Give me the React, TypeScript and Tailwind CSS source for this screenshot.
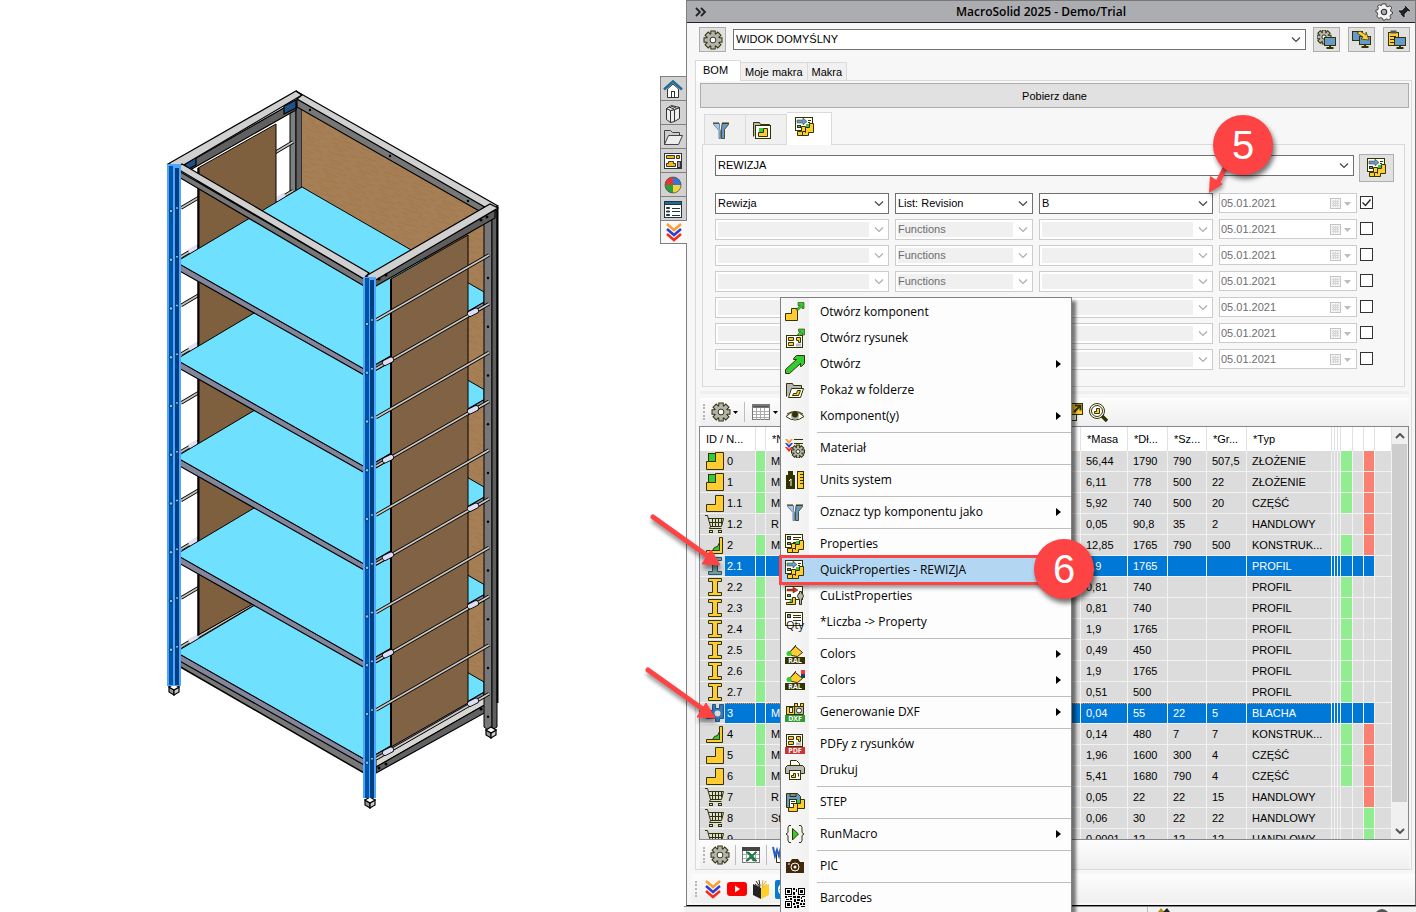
import { useState } from 'react'
import type { ReactNode } from 'react'

const INK = '#333300'
const YEL = '#ffcc33'
const GRN = '#33cc33'
const BLU = '#6699cc'

function Gear({ cx = 10, cy = 10, r = 6 }: { cx?: number; cy?: number; r?: number }) {
  const teeth = (stroke: string, grow: number) =>
    [0, 45, 90, 135].map((a) => (
      <rect
        key={a}
        x={cx - r / 4 - grow}
        y={cy - r - 1.5 - grow}
        width={r / 2 + grow * 2}
        height={r * 2 + 3 + grow * 2}
        fill={stroke}
        transform={`rotate(${a} ${cx} ${cy})`}
      />
    ))
  return (
    <g>
      {teeth(INK, 1)}
      <circle cx={cx} cy={cy} r={r} fill={INK} />
      {teeth('#b4b4b4', 0)}
      <circle cx={cx} cy={cy} r={r - 1} fill="#b4b4b4" />
      <circle cx={cx} cy={cy} r={r / 2.4} fill="#fff" stroke={INK} />
    </g>
  )
}

const doc = <rect x="0.5" y="0.5" width="17" height="13" fill="#fff" stroke={INK} />

const twoParts = (
  <g stroke={INK}>
    <path d="M2.5 18.5v-4h4v-5h4v9z" fill={YEL} />
    <path d="M10.5 15.5v-5h4v-4h4v9h-5v3h-6v-4h3z" fill={YEL} />
    <rect x="11" y="7" width="3" height="3" fill={GRN} stroke="none" />
  </g>
)

const cart = (
  <g fill="none" stroke={INK}>
    <path d="M0 1.5h2.5l3 11M3 4.5h15.500l-2 8H5M4 8.500h13.500M7.500 4.500v8M10.500 4.500v8M13.500 4.500v8M16.500 4.500v6M5.500 12.500l-1 2h12" />
    <rect x="4.500" y="16.500" width="3" height="2" />
    <rect x="13.500" y="16.500" width="3" height="2" />
  </g>
)

const chevrons = (
  <g fill="none" strokeWidth="2.500">
    <path d="M3 2l7 6 7-6" stroke="#ff9c2a" />
    <path d="M3 7l7 6 7-6" stroke="#2b3fd0" />
    <path d="M3 12l7 6 7-6" stroke="#f52a1a" />
  </g>
)

const plan = (y: number) => (
  <g stroke={INK}>
    <rect x="1.500" y={y} width="16" height="12" fill="#fff" />
    <path d={`M3.500 ${y + 2}h5v3h-5zM11.500 ${y + 2}h4v5h-2v-2h-2z`} fill={YEL} />
    <path d={`M3.500 ${y + 9}v-2h5v3h-5z`} fill={YEL} />
    <rect x="11" y={y + 8} width="5" height="3" fill="#bbb" stroke="none" />
  </g>
)

const monitor = (x: number, y: number) => (
  <g stroke={INK}>
    <path d={`M${x + 5.5} ${y + 8}v3M${x + 2} ${y + 10.5}h7`} strokeWidth="2" />
    <rect x={x} y={y} width="11" height="8" fill={BLU} />
  </g>
)

const ral = (
  <g>
    <path d="M4.500 8.500l6-6 7 6-5 4-6-1z" fill={YEL} stroke={INK} />
    <path d="M5 8l6-7" stroke={INK} />
    <circle cx="4" cy="9.500" r="2.500" fill={GRN} />
    <rect x="0" y="13" width="20" height="7" fill={INK} />
    <text x="10" y="19" textAnchor="middle" fontSize="7" fontWeight="bold" fill="#fff">RAL</text>
  </g>
)

const icons: Record<string, ReactNode> = {
  gear: <Gear r={7} />,
  part: <path d="M1.500 11.500h9v-9h8v16h-17z" fill={YEL} stroke={INK} />,
  assembly: (
    <g stroke={INK}>
      <path d="M1.500 10.500h9v-9h8v17h-17z" fill={YEL} />
      <rect x="3.500" y="2.500" width="7" height="8" fill={GRN} />
    </g>
  ),
  cart,
  frame: (
    <g stroke={INK}>
      <path d="M1.500 15.500h13v-13h3v16h-16z" fill={YEL} />
      <path d="M7.500 15.500l2-3 3-1 2-4v8z" fill={GRN} />
    </g>
  ),
  profile: <path d="M3.500 1.500h13v3h-4v11h4v3h-13v-3h4v-11h-4z" fill={YEL} stroke={INK} />,
  profileSel: <path d="M3.500 1.500h13v3h-4v11h4v3h-13v-3h4v-11h-4z" fill="#7da092" stroke="#1b5780" />,
  sheetSel: (
    <g>
      <path d="M1.500 7.500h6v-6h3v4h4v-4h4v14h-4v3h-4v-3h-9z" fill="#3778b4" stroke="#1b5780" />
      <circle cx="12.500" cy="10.500" r="3" fill="#dcdcdc" />
    </g>
  ),
  filter: (
    <g>
      <path d="M11 3.500h6.500v1l-4 5v9h-3v-9z" fill={BLU} stroke={INK} strokeWidth="0.800" />
      <path d="M2.500 3.500h6v5l1 2v8h-1.500v-8l-5.500-6z" fill="#a9c8e8" stroke="#4a6f94" strokeWidth="0.800" />
      <path d="M2 3h6M11 3h7" stroke={INK} />
    </g>
  ),
  folderPart: (
    <g stroke={INK}>
      <path d="M1.500 16.500v-14h6l1 2h9v2" fill="#b8b8b8" />
      <rect x="3.500" y="5.500" width="15" height="13" fill="#fff" />
      <path d="M6.500 12.500h5v-4h4v8h-9z" fill={YEL} />
      <rect x="7" y="8" width="4" height="4" fill={GRN} stroke="none" />
    </g>
  ),
  quick: (
    <g>
      {doc}
      <path d="M2 3h6v-2l4 3.500-4 3.500v-2H2z" fill={BLU} stroke={INK} strokeWidth="0.500" />
      <path d="M13 3.500h3M13 5.500h2" stroke={INK} />
      <rect x="2.500" y="8.500" width="3" height="2" fill={BLU} stroke={INK} />
      {twoParts}
    </g>
  ),
  props: (
    <g>
      {doc}
      <rect x="2.500" y="2.500" width="3" height="3" fill={BLU} stroke={INK} />
      <path d="M8 3.500h8M8 5.500h6M8 8.500h3" stroke={INK} />
      <rect x="2.500" y="8.500" width="3" height="2" fill={BLU} stroke={INK} />
      {twoParts}
    </g>
  ),
  cuList: (
    <g>
      {doc}
      <path d="M2 3h6v-2l5 3-5 3v-2H2z" fill="#d22" stroke={INK} strokeWidth="0.500" />
      <rect x="2.500" y="8.500" width="3" height="2" fill={BLU} stroke={INK} />
      <path d="M1.500 16.500h6v-5h3v7h-9z" fill={YEL} stroke={INK} />
      <path d="M4 16l3-4v4z" fill={GRN} />
      <path d="M12.500 10.500l1-3h1v-2h2v2h1l1 3-2 3v5h-2v-5z" fill="#b8b8b8" stroke={INK} />
    </g>
  ),
  qty: (
    <g>
      {doc}
      <rect x="2.500" y="2.500" width="3" height="3" fill={BLU} stroke={INK} />
      <path d="M8 3.500h8M8 5.500h8M8 8.500h8" stroke={INK} />
      <text x="1" y="17" fontSize="11" fill="#111">Qty</text>
    </g>
  ),
  openPart: (
    <g stroke={INK}>
      <path d="M0.500 11.500h6v-5h6v12h-12z" fill={YEL} />
      <path d="M11 7.500l4-4h-2v-3h6v6h-2v-2l-4 4z" fill={GRN} strokeWidth="0.600" />
    </g>
  ),
  openDrawing: (
    <g>
      {plan(7.5)}
      <path d="M12.500 6.500l3-3h-2v-2.500h6v6h-2v-2l-3 3z" fill={GRN} stroke={INK} strokeWidth="0.600" />
    </g>
  ),
  open: <path d="M0.500 15.500l11-10h-3v-1l3-3h8v8l-3 3h-1v-3l-11 10h-4z" fill={GRN} stroke={INK} />,
  folder: (
    <g stroke={INK}>
      <path d="M1.500 16.500v-13h6l1 2h8v3" fill="#b8b8b8" />
      <path d="M3.500 17.500l3-9h12l-3 9z" fill="#fff" />
      <path d="M7.500 15.500l1-2h3l1-3h3l-2 5z" fill={YEL} />
    </g>
  ),
  eye: (
    <g>
      <path d="M1 10.500q9-9 18 0q-9 7-18 0z" fill="#fff" stroke={INK} />
      <circle cx="10" cy="9.500" r="4" fill="#aaa" />
      <circle cx="10" cy="8.500" r="3" fill={INK} />
      <path d="M2 8q8-5 16 0" stroke={INK} fill="none" />
    </g>
  ),
  material: (
    <g>
      <path d="M0 1h2l2 2 2-2h2l-4 5z" fill="#ff9c2a" />
      <path d="M0 5h2l2 2 2-2h2l-4 5z" fill="#2b3fd0" />
      <path d="M0 9h2l2 2 2-2h2l-4 5z" fill="#f52a1a" />
      <path d="M9 1.500h9M9 5.500h9" stroke={INK} />
      <Gear cx={13} cy={13.5} r={4.5} />
    </g>
  ),
  units: (
    <g>
      <path d="M3 1h5v4h2v14H1V5h2z" fill={INK} />
      <path d="M4 11l2-2v7" stroke="#fff" fill="none" />
      <rect x="12.500" y="1.500" width="6" height="17" fill={YEL} stroke={INK} />
      <path d="M15 4.500h3M15 7.500h3M15 10.500h3M15 13.500h3" stroke={INK} />
    </g>
  ),
  ral,
  ralOver: (
    <g>
      {ral}
      <rect x="16" y="0" width="4" height="4" fill="#f33" />
      <rect x="16" y="4" width="4" height="4" fill="#146" />
    </g>
  ),
  dxf: (
    <g stroke={INK}>
      <rect x="1.500" y="4.500" width="8" height="8" fill={YEL} />
      <rect x="4.500" y="5.500" width="3" height="5" fill="#fff" />
      <path d="M9.500 12.500v-11h3v3h3v-3h3v11z" fill="#b8b8b8" />
      <path d="M9.500 1.500h3v3h-3zM15.500 1.500h3v3h-3z" fill={YEL} />
      <circle cx="14" cy="8.500" r="2.500" fill="#fff" />
      <rect x="0" y="13" width="20" height="7" fill="#339933" stroke="none" />
      <text x="10" y="19" textAnchor="middle" fontSize="7" fontWeight="bold" fill="#fff" stroke="none">DXF</text>
    </g>
  ),
  pdf: (
    <g>
      {plan(0.5)}
      <rect x="0" y="13" width="20" height="7" fill="#cc3333" />
      <text x="10" y="19" textAnchor="middle" fontSize="7" fontWeight="bold" fill="#fff">PDF</text>
    </g>
  ),
  printer: (
    <g stroke={INK}>
      <path d="M5.500 5.500v-5h6l3 3v2" fill="#fff" />
      <path d="M0.500 13.500v-6l2-2h15l2 2v6z" fill="#b8b8b8" />
      <rect x="4.500" y="10.500" width="11" height="9" fill="#fff" />
      <path d="M6.500 17.500v-2h2v-2h2v4zM12.500 13.500h1v3" fill={YEL} />
    </g>
  ),
  step: (
    <g stroke={INK}>
      <path d="M1.500 1.500h11l3 3v11h-14z" fill={BLU} />
      <path d="M5 1.500h6v3h-6z" fill="#888" />
      <rect x="4.500" y="7.500" width="7" height="8" fill="#fff" />
      <path d="M6 9.500h4M6 11.500h4" />
      <path d="M3.500 19.500v-4h5v-4h4v8zM12.500 16.500v-5h3v-4h4v9z" fill={YEL} />
      <rect x="12" y="8" width="3" height="3" fill={GRN} stroke="none" />
    </g>
  ),
  run: (
    <g fill="none" stroke={INK}>
      <path d="M6 1.500h-2l-1 2v5l-2 1.500 2 1.500v5l1 2h2M14 1.500h2l1 2v5l2 1.500-2 1.500v5l-1 2h-2" />
      <path d="M7.500 4.500l6 5.500-6 6z" fill={GRN} />
    </g>
  ),
  camera: (
    <g>
      <path d="M1 6h4l2-3h6l2 3h4v11H1z" fill="#42280a" />
      <circle cx="10" cy="11" r="4" fill="#42280a" stroke="#fff" />
      <path d="M3 8h2" stroke="#fff" />
      <circle cx="10" cy="11" r="1.500" fill="#fff" />
    </g>
  ),
  qr: (
    <g fill="#000">
      <path d="M0 0h7v7H0zM13 0h7v7h-7zM0 13h7v7H0z" />
      <path d="M1 1h5v5H1zM14 1h5v5h-5zM1 14h5v5H1z" fill="#fff" />
      <path d="M2 2h3v3H2zM15 2h3v3h-3zM2 15h3v3H2z" />
      <path d="M8 0h2v2H8zM11 1h1v3h-1zM8 4h2v3H8zM0 8h2v2H0zM3 8h4v1H3zM1 11h3v1H1zM5 10h2v2H5zM8 8h3v2H8zM12 8h3v2h-3zM16 9h1v2h-1zM17 8h3v1h-3zM9 11h2v3H9zM12 11h3v2h-3zM16 12h2v2h-2zM19 11h1v3h-1zM8 15h2v2H8zM9 18h2v2H9zM11 14h3v2h-3zM15 15h2v2h-2zM12 17h2v3h-2zM16 18h4v1h-4zM18 15h2v2h-2z" />
    </g>
  ),
  grid: (
    <g stroke="#777">
      <rect x="1.500" y="2.500" width="17" height="15" fill="#fff" />
      <path d="M2 3.500h16v2H2z" fill="#555" />
      <path d="M5.500 6v12M9.500 6v12M13.500 6v12M2 9.500h16M2 12.500h16M2 15.500h16" stroke="#aaa" />
    </g>
  ),
  excel: (
    <g>
      <rect x="1.500" y="2.500" width="17" height="15" fill="#fff" stroke="#777" />
      <path d="M5.500 6v12M14.500 6v12M2 9.500h16M2 13.500h16" stroke="#aaa" />
      <path d="M1 2h18v4H1z" fill="#444" />
      <path d="M5 7h3l3 3 3-3h2l-4 4 4 5h-4l-2-3-3 3H5l4-5z" fill="#1c8048" stroke="#135b32" strokeWidth="0.500" />
    </g>
  ),
  word: (
    <g>
      <path d="M4.500 9v8.500h12v-14h-6" fill="#fff" stroke={INK} />
      <path d="M1 2l2 9 2-6 2 6 2-9" stroke="#2b5cc4" strokeWidth="2" fill="none" />
    </g>
  ),
  export: (
    <g stroke={INK}>
      <rect x="3.500" y="8.500" width="10" height="10" fill="#fff" />
      <rect x="8.500" y="1.500" width="11" height="11" fill={YEL} />
      <path d="M11 10l6-6M12 3.500h5.500v5" strokeWidth="2" fill="none" />
    </g>
  ),
  search: (
    <g stroke={INK} fill="none">
      <circle cx="9" cy="9" r="7.500" fill="#fff" />
      <circle cx="9" cy="9" r="5.500" />
      <path d="M6.500 9.500h2v-3h3v5h-5z" fill={YEL} />
      <path d="M14 14l5 5" strokeWidth="3.500" />
    </g>
  ),
  chevrons,
  youtube: (
    <g>
      <rect x="0" y="3" width="20" height="14" rx="3" fill="#f00" />
      <path d="M8 6.500l5 3.500-5 3.500z" fill="#fff" />
    </g>
  ),
  book: (
    <g>
      <path d="M2 5l8 4v11l-8-4z" fill="#222" />
      <path d="M18 5l-8 4v11l8-4z" fill="#ffcf2a" />
      <path d="M4 5l5 4M5 2l4 6M8 1l1 6" stroke="#222" />
      <path d="M16 5l-5 4M15 2l-4 6M12 1l-1 6" stroke="#e0b020" />
    </g>
  ),
  teamviewer: (
    <g>
      <rect x="0" y="1" width="19" height="19" rx="2" fill="#0a78d0" />
      <circle cx="10" cy="10.500" r="7" fill="#fff" />
      <path d="M4 10.500l4-3v2h4v-2l4 3-4 3v-2H8v2z" fill="#0a78d0" />
    </g>
  ),
  monGear: (
    <g>
      <Gear cx={7} cy={7} r={5} />
      {monitor(7.5, 7.5)}
    </g>
  ),
  monCopy: (
    <g>
      <rect x="0.500" y="1.500" width="10" height="9" fill={BLU} stroke={INK} />
      {monitor(7.5, 6.5)}
      <path d="M5 3l3-2 6 4V2l3 8-8-1 2-2z" fill={YEL} stroke={INK} strokeWidth="0.700" />
    </g>
  ),
  monPaste: (
    <g>
      <rect x="1.500" y="2.500" width="10" height="13" fill={YEL} stroke={INK} />
      <rect x="3.500" y="0.500" width="6" height="3" fill="#555" />
      <path d="M3 6.500h6M3 9.500h4M3 12.500h4" stroke={INK} />
      {monitor(7.5, 7.5)}
    </g>
  ),
}

function Icon({ name, className = 'h-5 w-5' }: { name: string; className?: string }) {
  return (
    <svg viewBox="0 0 20 20" className={`shrink-0 ${className}`} aria-hidden="true">
      {icons[name]}
    </svg>
  )
}

const steps = [0, 1, 2, 3, 4, 5, 6, 7, 8, 9]

function Foot({ x, y }: { x: number; y: number }) {
  return (
    <g stroke="#000" strokeWidth="1.200">
      <path d={`M${x - 5} ${y - 3}l5 3v5l-5-3z`} fill="#999" />
      <path d={`M${x + 5} ${y - 3}l-5 3v5l5-3z`} fill="#ccc" />
      <path d={`M${x - 5} ${y - 3}l5-3 5 3-5 3z`} fill="#fff" />
    </g>
  )
}

const grain = (
  <path
    d="M0 2h12M16 5h9M4 9h14M22 12h7M12 1h9M0 6h7M6 12h8"
    stroke="#8f5c20"
    strokeOpacity="0.300"
    strokeWidth="0.800"
  />
)

function Rack() {
  return (
    <svg viewBox="160 80 350 740" className="h-[740px] w-[350px] shrink-0" role="img" aria-label="Model 3D regału">
      <defs>
        <pattern id="grainDown" width="30" height="14" patternUnits="userSpaceOnUse" patternTransform="rotate(20)">
          {grain}
        </pattern>
        <pattern id="grainUp" width="30" height="14" patternUnits="userSpaceOnUse" patternTransform="rotate(-24)">
          {grain}
        </pattern>
      </defs>

      {/* back post and back board */}
      <path d="M290 108h6v85h-6z" fill="#7f7f7f" stroke="#000" />
      <path d="M296 104h6v88h-6z" fill="#626262" stroke="#000" />
      <path d="M302 108l182 105v488L302 590z" fill="#a67f56" />
      <path d="M302 108l182 105v488L302 590z" fill="url(#grainDown)" />

      {steps.map((k) => (
        <g key={k}>
          <path d={`M181 ${208 + k * 48.75}L293 ${142 + k * 48.75}`} stroke="#000" strokeWidth="3.500" />
          <path d={`M181 ${208 + k * 48.75}L293 ${142 + k * 48.75}`} stroke="#c4c4bb" strokeWidth="1.800" />
          {k % 2 === 1 && (
            <path d={`M189 ${203 + k * 48.75}l9-5`} stroke="#dfe0f4" strokeWidth="5" />
          )}
        </g>
      ))}
      <path d="M285 195l-9 5" stroke="#dfe0f4" strokeWidth="5" />

      {/* left side board */}
      <path d="M198 168l78-44v467l-78 44z" fill="#7e6040" stroke="#000" />
      <path d="M198 168l78-44v467l-78 44z" fill="url(#grainUp)" />
      <path d="M198.500 168v467" stroke="#000" strokeWidth="2" />

      {/* bottom frame */}
      <path d="M177 656l187 107v10L177 665z" fill="#787878" stroke="#000" strokeWidth="1.500" />

      {/* shelves, lowest first */}
      {[4, 3, 2, 1, 0].map((s) => (
        <g key={s} transform={`translate(0 ${s * 97.5})`}>
          <path d="M176 262l190 108 118-68v6l-118 68-190-107z" fill="#83869b" stroke="#000" strokeWidth="1.200" />
          <path d="M176 262l126-75 182 105v10l-118 68z" fill="#70e0ff" stroke="#000" />
        </g>
      ))}
      <path d="M376 760l112-65v8L376 767z" fill="#d8d6d2" stroke="#000" />
      <path d="M376 767l112-64v8L376 773z" fill="#626262" stroke="#000" strokeWidth="1.200" />

      {/* right side board */}
      <path d="M391 279l77-44v468l-77 44z" fill="#806346" stroke="#000" />
      <path d="M391 279l77-44v468l-77 44z" fill="url(#grainUp)" />
      <path d="M391 279v468" stroke="#000" strokeWidth="2" />

      {/* right post */}
      <path d="M484 214h8v513l-4 3-4-3z" fill="#777" stroke="#000" />
      <path d="M492 210h5v517l-5 3z" fill="#5e5e5e" stroke="#000" />
      <path d="M497.500 207v496" stroke="#000" strokeWidth="2" />

      {steps.map((k) => (
        <g key={k} transform={`translate(0 ${k * 48.75})`}>
          <path d="M376 320l113-65" stroke="#000" strokeWidth="3.500" />
          <path d="M376 320l113-65" stroke="#cbc8c2" strokeWidth="1.800" />
          {k % 2 === 1 && (
            <g strokeLinecap="round">
              <path d="M385 314l6-3M470 265l6-3" stroke="#000" strokeWidth="6" />
              <path d="M385 314l6-3M470 265l6-3" stroke="#dcdff5" strokeWidth="4.500" />
            </g>
          )}
          <circle cx="488" cy="278" r="1.200" />
        </g>
      ))}

      {/* top frame */}
      <g stroke="#000" strokeWidth="1.200">
        <path d="M184 165l112-64v9l-106 60z" fill="#606060" />
        <path d="M284 106l12-6v8l-12 6zM184 165l12-8v8l-9 5z" fill="#1f5187" />
        <path d="M297 99l191 109v8L297 107z" fill="#777" />
        <path d="M168 164l128-73 6 4-120 71z" fill="#d0d0d0" />
        <path d="M296 91l202 115-8 4L297 99l5-4z" fill="#d0d0d0" />
        <path d="M177 170l187 109v7L177 176z" fill="#777" />
        <path d="M176 168l6-4 187 109-5 6z" fill="#d0d0d0" />
        <path d="M373 280l122-70v8l-119 68z" fill="#5e5e5e" />
        <path d="M366 276l124-72 8 4-124 73z" fill="#d0d0d0" />
      </g>
      <g>
        <circle cx="310" cy="110" r="1.200" />
        <circle cx="390" cy="156" r="1.200" />
        <circle cx="468" cy="201" r="1.200" />
        <circle cx="379" cy="279" r="1.500" />
        <circle cx="386" cy="275" r="1.500" />
        <circle cx="481" cy="220" r="1.500" />
        <circle cx="487" cy="217" r="1.500" />
        <circle cx="379" cy="768" r="1.500" />
        <circle cx="386" cy="764" r="1.500" />
        <circle cx="481" cy="709" r="1.500" />
      </g>

      <Foot x={174} y={690} />
      <Foot x={370} y={803} />
      <Foot x={491} y={733} />

      {/* selected posts */}
      <g shapeRendering="crispEdges">
        <path d="M167 164h14v522h-14z" fill="#4fa5fb" />
        <path d="M169 166h4v519h-4z" fill="#0054a8" />
        <path d="M175 168h4v517h-4z" fill="#003f80" />
        <path d="M363 277h13v521h-13z" fill="#4fa5fb" />
        <path d="M365 278h4v520h-4z" fill="#0054a8" />
        <path d="M370 280h4v518h-4z" fill="#003f80" />
      </g>
      {steps.map((k) => (
        <g key={k} fill="#70c4ff" stroke="#002850" strokeWidth="0.800">
          <circle cx="171" cy={211 + k * 48.75} r="1.800" />
          <circle cx="177" cy={208 + k * 48.75} r="1.500" />
          <circle cx="367" cy={324 + k * 48.75} r="1.800" />
          <circle cx="372" cy={320 + k * 48.75} r="1.500" />
        </g>
      ))}
    </svg>
  )
}

function Chevron({ muted }: { muted?: boolean }) {
  return (
    <svg viewBox="0 0 10 6" className="mr-[2px] h-[6px] w-[10px] shrink-0" fill="none" stroke={muted ? '#adadad' : '#444'} aria-hidden="true">
      <path d="M1 0.500l4 4 4-4" strokeWidth="1.200" />
    </svg>
  )
}

function Combo({ label, value, disabled, className = '' }: { label: string; value: string; disabled?: boolean; className?: string }) {
  return (
    <div className={`flex h-[21px] min-w-0 items-center gap-[5px] border bg-white p-[2px] ${disabled ? 'border-[#cccccc]' : 'border-[#707070]'} ${className}`}>
      <select
        aria-label={label}
        disabled={disabled}
        className="h-[15px] min-w-0 flex-1 appearance-none bg-white p-0 leading-[15px] text-black outline-none disabled:bg-[#f0f0f0] disabled:text-[#6d6d6d] disabled:opacity-100"
      >
        <option>{value}</option>
      </select>
      <Chevron muted={disabled} />
    </div>
  )
}

function DateField({ label }: { label: string }) {
  return (
    <div className="flex h-5 min-w-0 items-center border border-[#cccccc] bg-white pr-[5px] pl-px">
      <input aria-label={label} disabled defaultValue="05.01.2021" className="w-full min-w-0 flex-1 bg-white text-[#6d6d6d]" />
      <svg viewBox="0 0 22 13" className="h-[13px] w-[22px] shrink-0" aria-hidden="true">
        <rect x="1.500" y="1.500" width="10" height="10" fill="#f4f4f4" stroke="#c4c4c4" />
        <path d="M3 4.500h7M3 6.500h7M3 8.500h7M4.500 3v7M6.500 3v7M8.500 3v7" stroke="#d5d5dc" />
        <path d="M15 5h7l-3.500 4z" fill="#bdbdb5" />
      </svg>
    </div>
  )
}

const fieldRows = [
  { prop: 'Rewizja', fn: 'List: Revision', value: 'B', active: true },
  ...Array.from({ length: 6 }, () => ({ prop: '', fn: 'Functions', value: '', active: false })),
]

type Row = { id: string; icon: string; flag?: boolean; n: string; cells: string[]; a?: boolean; c?: 'red' | 'green'; sel?: boolean }

const rows: Row[] = [
  { id: '0', icon: 'assembly', flag: true, n: 'M', cells: ['56,44', '1790', '790', '507,5', 'ZŁOŻENIE'], a: true, c: 'red' },
  { id: '1', icon: 'assembly', flag: true, n: 'M', cells: ['6,11', '778', '500', '22', 'ZŁOŻENIE'], a: true, c: 'red' },
  { id: '1.1', icon: 'part', flag: true, n: 'M', cells: ['5,92', '740', '500', '20', 'CZĘŚĆ'], a: true, c: 'red' },
  { id: '1.2', icon: 'cart', n: 'R', cells: ['0,05', '90,8', '35', '2', 'HANDLOWY'], c: 'red' },
  { id: '2', icon: 'frame', flag: true, n: 'M', cells: ['12,85', '1765', '790', '500', 'KONSTRUK...'], a: true, c: 'red' },
  { id: '2.1', icon: 'profileSel', n: '', cells: ['1,9', '1765', '', '', 'PROFIL'], sel: true },
  { id: '2.2', icon: 'profile', flag: true, n: '', cells: ['0,81', '740', '', '', 'PROFIL'], a: true },
  { id: '2.3', icon: 'profile', flag: true, n: '', cells: ['0,81', '740', '', '', 'PROFIL'], a: true },
  { id: '2.4', icon: 'profile', flag: true, n: '', cells: ['1,9', '1765', '', '', 'PROFIL'], a: true },
  { id: '2.5', icon: 'profile', flag: true, n: '', cells: ['0,49', '450', '', '', 'PROFIL'], a: true },
  { id: '2.6', icon: 'profile', flag: true, n: '', cells: ['1,9', '1765', '', '', 'PROFIL'], a: true },
  { id: '2.7', icon: 'profile', flag: true, n: '', cells: ['0,51', '500', '', '', 'PROFIL'], a: true },
  { id: '3', icon: 'sheetSel', n: 'M', cells: ['0,04', '55', '22', '5', 'BLACHA'], sel: true },
  { id: '4', icon: 'frame', flag: true, n: 'M', cells: ['0,14', '480', '7', '7', 'KONSTRUK...'], a: true, c: 'red' },
  { id: '5', icon: 'part', flag: true, n: 'M', cells: ['1,96', '1600', '300', '4', 'CZĘŚĆ'], a: true, c: 'red' },
  { id: '6', icon: 'part', flag: true, n: 'M', cells: ['5,41', '1680', '790', '4', 'CZĘŚĆ'], a: true, c: 'red' },
  { id: '7', icon: 'cart', n: 'R', cells: ['0,05', '22', '22', '15', 'HANDLOWY'], c: 'red' },
  { id: '8', icon: 'cart', n: 'St', cells: ['0,06', '30', '22', '22', 'HANDLOWY'], c: 'green' },
  { id: '9', icon: 'cart', n: '', cells: ['0,0001', '12', '12', '12', 'HANDLOWY'], c: 'green' },
]

const headers = ['ID / N...', '', '*N', '*Masa', '*Dł...', '*Sz...', '*Gr...', '*Typ', '', '', '', '', '', '', '']

function BomTable() {
  return (
    <table className="w-full table-fixed border-separate border-spacing-0 text-left">
      <colgroup>
        <col className="w-[56px]" />
        <col className="w-[10px]" />
        <col />
        <col className="w-[47px]" />
        <col className="w-[40px]" />
        <col className="w-[39px]" />
        <col className="w-[40px]" />
        <col className="w-[85px]" />
        <col className="w-[3px]" />
        <col className="w-[3px]" />
        <col className="w-[3px]" />
        <col className="w-[12px]" />
        <col className="w-[11px]" />
        <col className="w-[11px]" />
        <col className="w-[17px]" />
      </colgroup>
      <thead>
        <tr className="h-6">
          {headers.map((h, i) => (
            <th key={i} className={`overflow-hidden border-r border-[#e2e2e2] bg-white font-normal whitespace-nowrap ${h ? 'pl-[6px]' : 'p-0'}`}>
              {h}
            </th>
          ))}
        </tr>
      </thead>
      <tbody>
        {rows.map((r) => {
          const bg = r.sel ? 'bg-[#0078d7] text-white' : 'bg-[#dcdcdc]'
          const edge = r.id === '3' ? 'border-t border-t-[#ff8a2a] border-dotted pb-px' : ''
          const line = 'h-[21px] border-r border-b border-r-[#f2f2f2] border-b-[#f2f2f2] p-0'
          return (
            <tr key={r.id}>
              <td className={`${line} bg-[#dcdcdc]`}>
                <div className="flex h-5 items-center pl-[5px]">
                  <Icon name={r.icon} />
                  <span className={`flex h-5 flex-1 items-center pl-[2px] ${bg} ${edge}`}>{r.id}</span>
                </div>
              </td>
              <td className={`${line} ${r.flag ? 'bg-[#90ee90]' : bg}`} />
              <td className={`${line} ${bg}`}>
                <div className={`flex h-5 items-center pl-[5px] ${edge}`}>{r.n}</div>
              </td>
              {r.cells.map((c, i) => (
                <td key={i} className={`${line} ${bg}`}>
                  <div className={`flex h-5 items-center pl-[5px] whitespace-nowrap ${edge}`}>{c}</div>
                </td>
              ))}
              <td className={`${line} ${bg}`} />
              <td className={`${line} ${bg}`} />
              <td className={`${line} ${bg}`} />
              <td className={`${line} ${r.a ? 'bg-[#90ee90]' : bg}`} />
              <td className={`${line} ${bg}`} />
              <td className={`${line} ${r.c === 'red' ? 'bg-[#fa8072]' : r.c === 'green' ? 'bg-[#90ee90]' : bg}`} />
              <td className={`${line} bg-[#dcdcdc]`} />
            </tr>
          )
        })}
      </tbody>
    </table>
  )
}

type MenuEntry = { icon: string; label: string; sub?: boolean; active?: boolean } | null

const menu: MenuEntry[] = [
  { icon: 'openPart', label: 'Otwórz komponent' },
  { icon: 'openDrawing', label: 'Otwórz rysunek' },
  { icon: 'open', label: 'Otwórz', sub: true },
  { icon: 'folder', label: 'Pokaż w folderze' },
  { icon: 'eye', label: 'Komponent(y)', sub: true },
  null,
  { icon: 'material', label: 'Materiał' },
  null,
  { icon: 'units', label: 'Units system' },
  null,
  { icon: 'filter', label: 'Oznacz typ komponentu jako', sub: true },
  null,
  { icon: 'props', label: 'Properties' },
  { icon: 'quick', label: 'QuickProperties - REWIZJA', active: true },
  { icon: 'cuList', label: 'CuListProperties' },
  { icon: 'qty', label: '*Liczba -> Property' },
  null,
  { icon: 'ral', label: 'Colors', sub: true },
  { icon: 'ralOver', label: 'Colors', sub: true },
  null,
  { icon: 'dxf', label: 'Generowanie DXF', sub: true },
  null,
  { icon: 'pdf', label: 'PDFy z rysunków' },
  { icon: 'printer', label: 'Drukuj' },
  null,
  { icon: 'step', label: 'STEP' },
  null,
  { icon: 'run', label: 'RunMacro', sub: true },
  null,
  { icon: 'camera', label: 'PIC' },
  null,
  { icon: 'qr', label: 'Barcodes' },
]

function ContextMenu() {
  return (
    <div
      role="menu"
      className="absolute top-[297px] left-[94px] z-20 w-[292px] border border-[#808080] bg-[#fdfdfd] bg-linear-to-r from-[#f8f8f8] from-0% to-[#f1f1f1] to-100% bg-[length:28px_100%] bg-no-repeat pt-px pb-1 font-['Open_Sans','Noto_Sans',sans-serif] text-[12px] leading-4 text-black shadow-[4px_4px_3px_rgba(0,0,0,0.5)]"
    >
      {menu.map((m, i) =>
        m === null ? (
          <div key={i} role="separator" className="ml-9 flex h-[6px] items-center">
            <div className="h-px w-full bg-[#bdbdbd]" />
          </div>
        ) : (
          <button
            key={i}
            role="menuitem"
            className={`flex h-[26px] w-full items-center pr-[10px] pl-1 text-left whitespace-nowrap ${m.active ? 'bg-[#b3d7f3] outline-3 -outline-offset-1 outline-[#fd4344] shadow-[2px_5px_4px_rgba(0,0,0,0.4)]' : ''}`}
          >
            <Icon name={m.icon} />
            <span className="flex-1 pl-[15px]">{m.label}</span>
            {m.sub && (
              <svg viewBox="0 0 5 8" className="h-2 w-[5px]" aria-hidden="true">
                <path d="M0 0l5 4-5 4z" />
              </svg>
            )}
          </button>
        ),
      )}
    </div>
  )
}

function Grip() {
  return <div className="h-4 w-0 border-l-2 border-dotted border-[#b5b5b5]" />
}

function Divider() {
  return <div className="h-5 w-px bg-[#bdbdbd]" />
}

function ToolButton({ icon, label, drop }: { icon: string; label: string; drop?: boolean }) {
  return (
    <button aria-label={label} className="flex items-center gap-[2px]">
      <Icon name={icon} />
      {drop && (
        <svg viewBox="0 0 5 3" className="h-[3px] w-[5px]" aria-hidden="true">
          <path d="M0 0h5L2.500 3z" />
        </svg>
      )}
    </button>
  )
}

const dockIcons: ReactNode[] = [
  <g stroke="#333" fill="#fff"><path d="M4.500 10v8.500h11V10L10 5z" /><rect x="8.500" y="12.500" width="3" height="6" /><path d="M1 10.500l9-8 9 8" fill="none" stroke="#1e6b94" strokeWidth="2.500" /></g>,
  <g stroke="#333" fill="#eee"><path d="M3.500 5.500l4 2v12l-4-3zM7.500 7.500l4-1v12l-4 1zM11.500 6.500l5-2v11l-5 3z" /><path d="M3.500 5.500l5-3 8 2-5 2-4 1z" /><path d="M6 4l5 2M8 3l5 2" /></g>,
  <g stroke="#444"><path d="M1.500 17.500v-14h6l2 2h7v3" fill="#ccc" /><path d="M1.500 17.500l4-9h14l-4 9z" fill="#eee" /></g>,
  <g stroke="#333"><rect x="1.500" y="2.500" width="17" height="15" fill="#fff" /><path d="M3.500 4.500h8v3h-8zM13.500 4.500h3v3h-3zM8.500 10.500h-3v2h-2v3h9v-3h-2v-2z" fill="#f5b914" /><rect x="14.500" y="10.500" width="3" height="6" fill="#999" /></g>,
  <g><path d="M10 10V2a8 8 0 00-8 8z" fill="#e8382e" /><path d="M10 10V2a8 8 0 018 8z" fill="#3573d8" /><path d="M10 10H2a8 8 0 008 8z" fill="#28a03c" /><path d="M10 10h8a8 8 0 01-8 8z" fill="#f2d43a" /><circle cx="10" cy="10" r="8" fill="none" stroke="#444" strokeWidth="0.700" /></g>,
  <g stroke="#234"><rect x="1.500" y="2.500" width="17" height="16" fill="#fff" /><path d="M1.500 2.500h17v3h-17z" fill="#1e6b94" /><path d="M3.500 8.500h3v1h-3zM3.500 12h3v1h-3zM3.500 15.500h3v1h-3z" fill="#1e6b94" /><path d="M9 9.500h8M9 12.500h8M9 16.500h8" /></g>,
  chevrons,
]

const dockLabels = ['Start', 'Biblioteka', 'Pliki', 'Paleta widoków', 'Wyglądy', 'Właściwości', 'MacroSolid']

function Dock() {
  return (
    <nav className="z-10 -mr-px flex w-[27px] shrink-0 flex-col pt-[76px]" aria-label="Panel zadań">
      {dockIcons.map((d, i) => (
        <button
          key={i}
          aria-label={dockLabels[i]}
          className={`flex h-6 items-center justify-center border-t border-l border-[#808080] pr-px ${i === 6 ? 'border-b bg-[#f9f9f9]' : 'border-r bg-[#d2d2d2]'}`}
        >
          <svg viewBox="0 0 20 20" className="h-5 w-5" aria-hidden="true">{d}</svg>
        </button>
      ))}
    </nav>
  )
}

function Badge({ children, className }: { children: ReactNode; className: string }) {
  return (
    <div className={`pointer-events-none absolute z-30 flex h-[60px] w-[60px] items-center justify-center rounded-full bg-[#fd4344] text-[40px] leading-none text-white shadow-[2px_4px_5px_rgba(0,0,0,0.55)] ${className}`}>
      {children}
    </div>
  )
}

function Pointer({ className }: { className: string }) {
  return (
    <svg viewBox="0 0 80 62" className={`pointer-events-none absolute z-30 h-[62px] w-[80px] drop-shadow-[1px_4px_2px_rgba(0,0,0,0.45)] ${className}`} aria-hidden="true">
      <path d="M5 5l56 40" stroke="#fd4344" strokeWidth="5" strokeLinecap="round" />
      <path d="M72 53l-18-1 9-14z" fill="#fd4344" stroke="#fd4344" />
    </svg>
  )
}

const pushButton = 'flex items-center justify-center border border-[#adadad] bg-[#e1e1e1]'

export default function App() {
  const [tab, setTab] = useState('BOM')

  return (
    <div className="flex h-screen overflow-hidden bg-white font-['Liberation_Sans',Arial,sans-serif] text-[11px] leading-[14px] text-black">
      <main className="w-[660px] shrink-0 overflow-hidden pt-20 pl-[160px]">
        <Rack />
      </main>
      <Dock />

      <div className="relative flex min-w-0 flex-1 flex-col">
        <section className="flex min-h-0 flex-1 flex-col border-t border-r border-b border-l border-t-[#777] border-r-[#777] border-b-black border-l-[#808080] bg-[#f7f7f7]">
          <header className="flex h-[22px] shrink-0 items-center border-b border-[#222] bg-[#acadb1] pr-1 pl-2">
            <button aria-label="Zwiń panel">
              <svg viewBox="0 0 12 10" className="h-[10px] w-3" fill="none" stroke="#222" strokeWidth="1.800" aria-hidden="true">
                <path d="M1 1l4 4-4 4M6 1l4 4-4 4" />
              </svg>
            </button>
            <h1 className="flex-1 text-center font-['Open_Sans','Noto_Sans',sans-serif] text-[12px] leading-4 font-semibold">MacroSolid 2025 - Demo/Trial</h1>
            <button aria-label="Ustawienia">
              <svg viewBox="0 0 20 20" className="h-[18px] w-[18px]" aria-hidden="true">
                <path
                  d="M8 1h4l.5 2.500 2 .8L16.700 3l2 2.500-1.500 2 .5 2 1.800.5v2l-2 .7-.8 2 1 2-2.500 2-2-1-2 .8L11 19H9l-.7-2-2-.8-2 1L2 14.500l1-2-.6-2L1 10V8l2-.5.8-2L2.700 3.500 5 2l2 1z"
                  fill="#f4f4f4"
                  stroke="#333"
                />
                <circle cx="10" cy="10" r="3" fill="#acadb1" stroke="#333" strokeWidth="1.200" />
              </svg>
            </button>
            <button aria-label="Przypnij" className="ml-1">
              <svg viewBox="0 0 14 14" className="h-[14px] w-[14px]" stroke="#eee" strokeWidth="0.500" aria-hidden="true">
                <path d="M8 0l6 6-2 1-1-1-3 3v3l-1 1-3-3-4 4-.5-.5L4 9 1 6l1-1h3l3-3-1-1z" fill="#222" />
              </svg>
            </button>
          </header>

          <div className="flex shrink-0 gap-[7px] pt-1 pr-[5px] pl-3">
            <button aria-label="Opcje widoku" className={`h-[25px] w-[27px] shrink-0 ${pushButton}`}><Icon name="gear" /></button>
            <Combo label="Widok" value="WIDOK DOMYŚLNY" className="mt-[2px] flex-1" />
            <div className="flex shrink-0 gap-2">
              <button aria-label="Ustawienia widoku" className={`h-[25px] w-[27px] ${pushButton}`}><Icon name="monGear" /></button>
              <button aria-label="Kopiuj widok" className={`h-[25px] w-[27px] ${pushButton}`}><Icon name="monCopy" /></button>
              <button aria-label="Wklej widok" className={`h-[25px] w-[27px] ${pushButton}`}><Icon name="monPaste" /></button>
            </div>
          </div>

          <div className="mt-2 ml-2 flex h-5 shrink-0 items-end" role="tablist">
            {['BOM', 'Moje makra', 'Makra'].map((t) => (
              <button
                key={t}
                role="tab"
                aria-selected={tab === t}
                onClick={() => setTab(t)}
                className={
                  tab === t
                    ? 'z-10 -mb-px h-[21px] border border-b-0 border-[#dadada] bg-white pr-3 pb-[2px] pl-[7px]'
                    : 'h-[18px] border border-b-0 border-l-0 border-[#dadada] bg-[#f0f0f0] px-1'
                }
              >
                {t}
              </button>
            ))}
          </div>

          <div className="mr-[3px] ml-2 flex min-h-0 flex-1 flex-col border border-[#dadada] bg-[#f7f7f7] pt-[2px] pr-[2px] pl-1">
            <button className={`h-[25px] shrink-0 ${pushButton}`}>Pobierz dane</button>

            <div className="mt-1 ml-1 flex h-8 shrink-0 items-end" role="tablist">
              <button role="tab" aria-label="Filtr" className="flex h-[30px] w-[42px] items-center border border-b-0 border-[#dadada] bg-[#f0f0f0] pl-1.5"><Icon name="filter" /></button>
              <button role="tab" aria-label="Foldery" className="flex h-[30px] w-[41px] items-center border border-b-0 border-l-0 border-[#dadada] bg-[#f0f0f0] pl-1.5"><Icon name="folderPart" /></button>
              <button role="tab" aria-label="Szybkie właściwości" aria-selected="true" className="z-10 -mb-px flex h-[33px] w-[45px] items-center border border-b-0 border-l-0 border-[#dadada] bg-white pb-1 pl-2"><Icon name="quick" /></button>
            </div>

            <div className="mr-1 ml-[2px] shrink-0 border border-[#dadada] pt-[10px] pr-[10px] pb-4 pl-3">
              <div className="flex items-start gap-[5px]">
                <Combo label="Zestaw właściwości" value="REWIZJA" className="flex-1" />
                <button aria-label="Zapisz właściwości" className={`-mt-px h-7 w-[35px] shrink-0 ${pushButton}`}><Icon name="quick" /></button>
              </div>
              <div className="mt-[11px] flex flex-col gap-[5px] pr-[21px]">
                {fieldRows.map((f, i) => (
                  <div key={i} className="flex items-start gap-[3px]">
                    <div className="grid flex-1 grid-cols-[174fr_138fr_174fr_138fr] gap-1.5">
                      <Combo label={`Właściwość ${i + 1}`} value={f.prop} disabled={!f.active} />
                      <Combo label={`Funkcja ${i + 1}`} value={f.fn} disabled={!f.active} />
                      <Combo label={`Wartość ${i + 1}`} value={f.value} disabled={!f.active} />
                      <DateField label={`Data ${i + 1}`} />
                    </div>
                    <label className="mt-[3px] grid">
                      <input type="checkbox" aria-label={`Użyj wiersza ${i + 1}`} defaultChecked={f.active} className="peer col-start-1 row-start-1 h-[13px] w-[13px] appearance-none border border-[#333] bg-white" />
                      <svg viewBox="0 0 13 13" className="pointer-events-none invisible col-start-1 row-start-1 h-[13px] w-[13px] peer-checked:visible" fill="none" stroke="#222" strokeWidth="1.300" aria-hidden="true">
                        <path d="M2.500 6.500l3 3 5-6" />
                      </svg>
                    </label>
                  </div>
                ))}
              </div>
            </div>

            <div className="mt-1 h-[3px] shrink-0 bg-[#efefef]" />

            <div className="mt-1 flex h-7 shrink-0 items-center gap-[6px] bg-linear-to-b from-[#fdfdfd] to-[#efefef] pl-[3px]">
              <Grip />
              <ToolButton icon="gear" label="Opcje tabeli" drop />
              <Divider />
              <ToolButton icon="grid" label="Kolumny" drop />
              <div className="ml-[279px] flex items-center gap-[5px]">
                <ToolButton icon="export" label="Eksport" />
                <ToolButton icon="search" label="Szukaj" />
              </div>
            </div>

            <div className="-ml-px flex min-h-0 flex-1 border border-[#828790] bg-white">
              <div className="min-w-0 flex-1 overflow-hidden">
                <BomTable />
              </div>
              <div className="flex w-4 shrink-0 flex-col bg-[#f0f0f0]">
                <div className="flex h-[17px] items-center justify-center">
                  <svg viewBox="0 0 10 6" className="h-[6px] w-[10px]" fill="none" stroke="#555" strokeWidth="2" aria-hidden="true"><path d="M1 5l4-4 4 4" /></svg>
                </div>
                <div className="mr-px flex-1 bg-[#cdcdcd]" />
                <div className="h-[20px]" />
                <div className="flex h-[17px] items-center justify-center">
                  <svg viewBox="0 0 10 6" className="h-[6px] w-[10px]" fill="none" stroke="#555" strokeWidth="2" aria-hidden="true"><path d="M1 1l4 4 4-4" /></svg>
                </div>
              </div>
            </div>

            <div className="flex h-[29px] shrink-0 items-center gap-[5px] bg-linear-to-b from-[#fdfdfd] to-[#efefef] pl-[3px]">
              <Grip />
              <ToolButton icon="gear" label="Ustawienia eksportu" />
              <Divider />
              <ToolButton icon="excel" label="Excel" />
              <Divider />
              <ToolButton icon="word" label="Word" />
            </div>
          </div>

          <div className="mt-1 mb-[2px] ml-1 flex h-[29px] shrink-0 items-center gap-1 bg-linear-to-b from-[#fdfdfd] to-[#efefef] pl-1">
            <div className="pr-[2px]">
              <Grip />
            </div>
            <ToolButton icon="chevrons" label="MacroSolid" />
            <ToolButton icon="youtube" label="YouTube" />
            <ToolButton icon="book" label="Pomoc" />
            <ToolButton icon="teamviewer" label="TeamViewer" />
          </div>
        </section>
        <footer className="-ml-0.5 flex h-1.5 shrink-0 justify-between border-t border-[#888] bg-[#f2f2f2] pr-7 pl-[463px]">
          <svg viewBox="0 0 24 5" className="h-[5px] w-6" aria-hidden="true">
            <path d="M0.500 0v5" stroke="#bbb" />
            <path d="M11 5l3-4 3 4z" fill="#b8860b" />
            <path d="M16 5l4-4 3 4z" fill="#222" />
          </svg>
          <svg viewBox="0 0 12 5" className="h-[5px] w-3" aria-hidden="true"><path d="M0 5q6-6 12 0z" fill="#555" /></svg>
        </footer>

        <ContextMenu />
        <Pointer className="top-[512px] -left-[38px]" />
        <Pointer className="top-[665px] -left-[43px]" />
        <svg viewBox="0 0 30 40" className="pointer-events-none absolute top-[158px] left-[519px] z-30 h-10 w-[30px] drop-shadow-[1px_3px_2px_rgba(0,0,0,0.4)]" aria-hidden="true">
          <path d="M22 6l-9 18" stroke="#fd4344" strokeWidth="5" />
          <path d="M4 35l1-17 13 8z" fill="#fd4344" />
        </svg>
        <Badge className="top-[115px] left-[527px]">5</Badge>
        <Badge className="top-[539px] left-[348px]">6</Badge>
      </div>
    </div>
  )
}
